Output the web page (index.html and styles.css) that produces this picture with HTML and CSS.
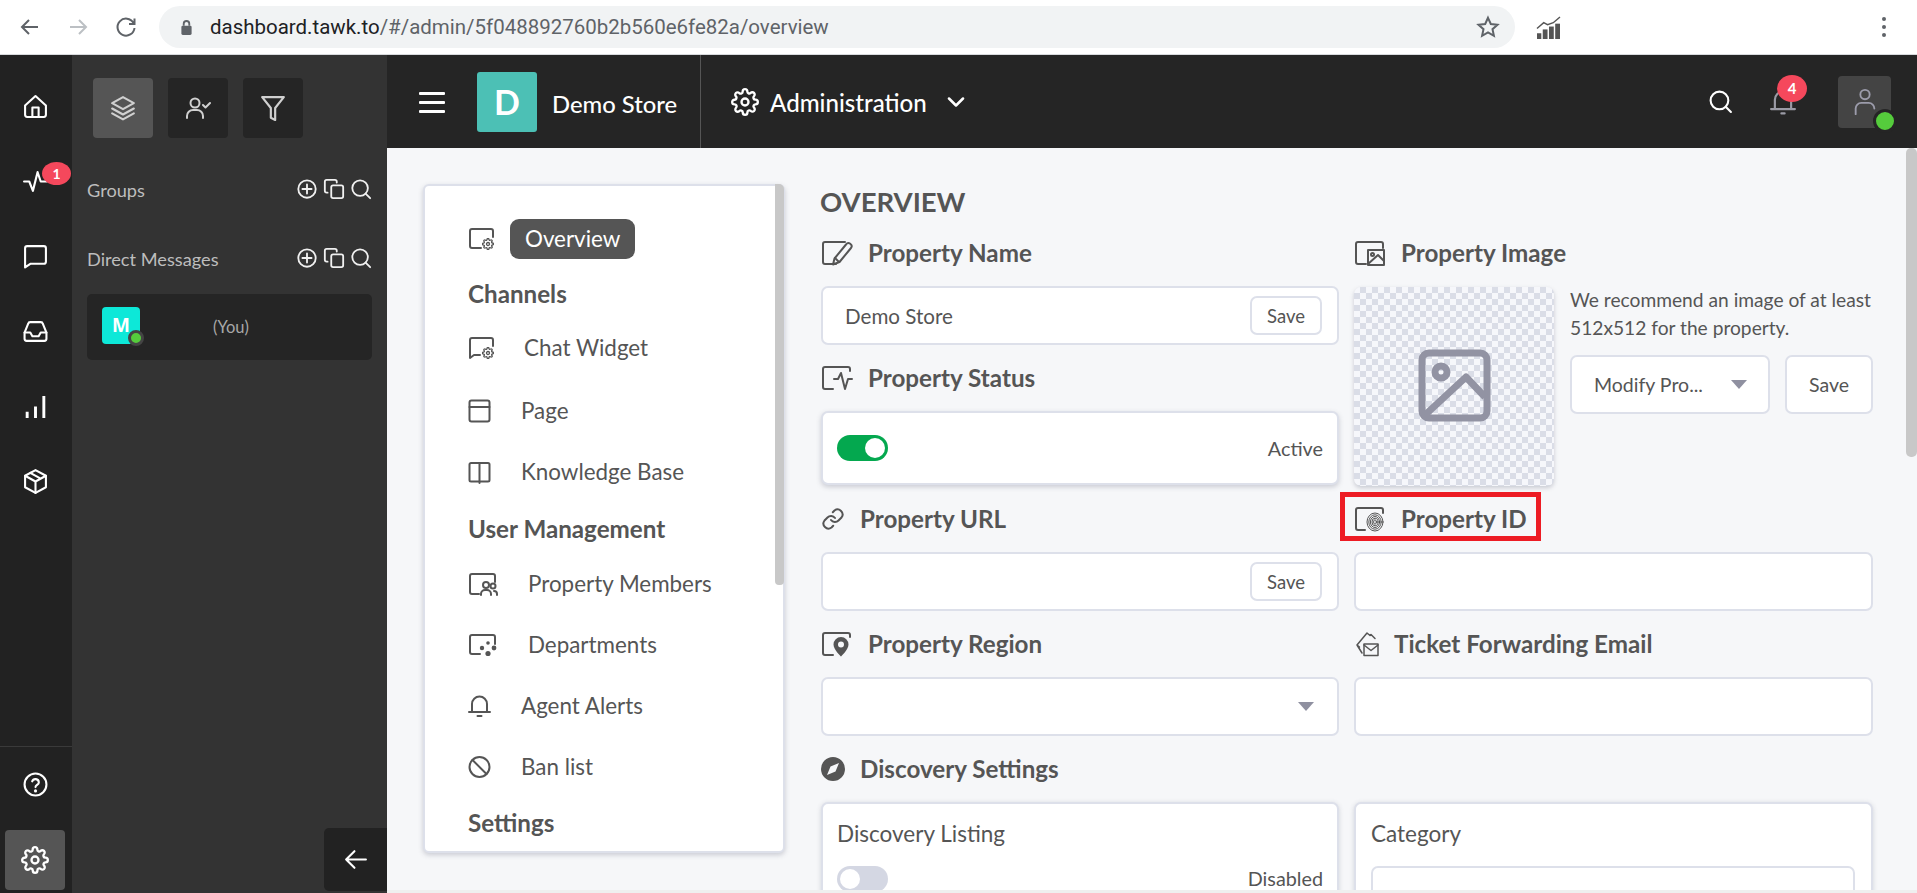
FILE: index.html
```html
<!DOCTYPE html>
<html lang="en">
<head>
<meta charset="utf-8">
<title>tawk.to Administration</title>
<link rel="stylesheet" href="styles.css">
</head>
<body>
<svg class="defs" width="0" height="0" aria-hidden="true">
  <defs>
    <symbol id="gear" viewBox="0 0 24 24"><circle cx="12" cy="12" r="3"/><path d="M19.4 15a1.65 1.65 0 0 0 .33 1.82l.06.06a2 2 0 0 1 0 2.83 2 2 0 0 1-2.83 0l-.06-.06a1.65 1.65 0 0 0-1.82-.33 1.65 1.65 0 0 0-1 1.51V21a2 2 0 0 1-2 2 2 2 0 0 1-2-2v-.09A1.65 1.65 0 0 0 9 19.4a1.65 1.65 0 0 0-1.82.33l-.06.06a2 2 0 0 1-2.83 0 2 2 0 0 1 0-2.83l.06-.06a1.65 1.65 0 0 0 .33-1.82 1.65 1.65 0 0 0-1.51-1H3a2 2 0 0 1-2-2 2 2 0 0 1 2-2h.09A1.65 1.65 0 0 0 4.6 9a1.65 1.65 0 0 0-.33-1.82l-.06-.06a2 2 0 0 1 0-2.83 2 2 0 0 1 2.83 0l.06.06a1.65 1.65 0 0 0 1.82.33H9a1.65 1.65 0 0 0 1-1.51V3a2 2 0 0 1 2-2 2 2 0 0 1 2 2v.09a1.65 1.65 0 0 0 1 1.51 1.65 1.65 0 0 0 1.82-.33l.06-.06a2 2 0 0 1 2.83 0 2 2 0 0 1 0 2.83l-.06.06a1.65 1.65 0 0 0-.33 1.82V9a1.65 1.65 0 0 0 1.51 1H21a2 2 0 0 1 2 2 2 2 0 0 1-2 2h-.09a1.65 1.65 0 0 0-1.51 1z"/></symbol>
    <symbol id="plus" viewBox="0 0 24 24"><circle cx="12" cy="12" r="9.5"/><path d="M12 7v10M7 12h10"/></symbol>
    <symbol id="copy" viewBox="0 0 24 24"><rect x="9" y="8" width="13" height="14" rx="2"/><path d="M5 16H4a2 2 0 0 1-2-2V4a2 2 0 0 1 2-2h9a2 2 0 0 1 2 2v1"/></symbol>
    <symbol id="find" viewBox="0 0 24 24"><circle cx="11" cy="11" r="8.5"/><path d="m17 17 5 5"/></symbol>
  </defs>
</svg>

<header class="browser">
  <svg class="nav" viewBox="0 0 24 24"><path d="M20 12H5M11 5l-7 7 7 7"/></svg>
  <svg class="nav nav-off" viewBox="0 0 24 24"><path d="M4 12h15M13 5l7 7-7 7"/></svg>
  <svg class="nav" viewBox="0 0 24 24"><path d="M19.5 8A8.5 8.5 0 1 0 20.5 13M20.5 3.5V9H15"/></svg>
  <div class="omnibox">
    <svg class="lock" viewBox="0 0 14 18"><path d="M4 7V5a3 3 0 0 1 6 0v2" class="lock-arc"/><rect x="1.5" y="7" width="11" height="10" rx="1.5"/></svg>
    <span class="url"><span class="url-host">dashboard.tawk.to</span>/#/admin/5f048892760b2b560e6fe82a/overview</span>
    <svg class="star" viewBox="0 0 24 24"><path d="m12 2.8 2.8 6.2 6.7.7-5 4.5 1.4 6.6-5.9-3.4-5.9 3.4 1.4-6.6-5-4.5 6.7-.7z"/></svg>
  </div>
  <svg class="ext" viewBox="0 0 26 24"><path class="ext-line" d="M1 13 8 7l4 2 6-2 7-6"/><rect x="1" y="18" width="4.500" height="6"/><rect x="7" y="14" width="5" height="10"/><rect x="13.500" y="11" width="5" height="13"/><rect x="20" y="8" width="5" height="16"/></svg>
  <div class="kebab"><i></i><i></i><i></i></div>
</header>

<div class="app">
  <nav class="rail">
    <div class="rail-top">
      <a class="rail-btn"><svg class="ic rail-ic" viewBox="0 0 24 24"><path d="M2 11 12 2l10 9v9a2 2 0 0 1-2 2H4a2 2 0 0 1-2-2z"/><path d="M9 22v-9h6v9"/></svg></a>
      <a class="rail-btn"><svg class="ic rail-ic" viewBox="0 0 24 24"><path d="M1 12h5l3.500 9L14 3l3 9h6"/></svg><span class="badge badge-rail">1</span></a>
      <a class="rail-btn"><svg class="ic rail-ic" viewBox="0 0 24 24"><path d="M2 4a2 2 0 0 1 2-2h16a2 2 0 0 1 2 2v13a2 2 0 0 1-2 2H7l-5 3.500z"/></svg></a>
      <a class="rail-btn"><svg class="ic rail-ic" viewBox="0 0 24 24"><path d="M1.500 13 5 4.500A2 2 0 0 1 7 3h10a2 2 0 0 1 2 1.500l3.500 8.500v6a2 2 0 0 1-2 2h-17a2 2 0 0 1-2-2z"/><path d="M1.500 13H7l2 3.500h6l2-3.500h5.500"/></svg></a>
      <a class="rail-btn"><svg class="ic rail-ic" viewBox="0 0 24 24"><path d="M4 23v-6M12 23V12M20 23V2" class="thick"/></svg></a>
      <a class="rail-btn"><svg class="ic rail-ic" viewBox="0 0 24 24"><path d="M12 1 22 6.500v11L12 23 2 17.500v-11z"/><path d="M2 6.500 12 12l10-5.500M12 12v11M7 3.800l10 5.500"/></svg></a>
    </div>
    <div class="rail-bottom">
      <a class="rail-btn"><svg class="ic rail-ic" viewBox="0 0 24 24"><circle cx="12" cy="12" r="10.500"/><path d="M8.800 9a3.300 3.300 0 0 1 6.400 1c0 2.200-3.200 2.600-3.200 4.500"/><path d="M12 18v.2" class="dot"/></svg></a>
      <a class="rail-active"><svg class="ic rail-gear"><use href="#gear"/></svg></a>
    </div>
  </nav>

  <aside class="panel">
    <div class="tabs">
      <a class="tab tab-on"><svg class="ic tab-ic" viewBox="0 0 24 24"><path d="M12 2 2 7.500 12 13l10-5.500z"/><path d="m2 12.500 10 5.500 10-5.500M2 17l10 5.500L22 17"/></svg></a>
      <a class="tab"><svg class="ic tab-ic" viewBox="0 0 26 24"><circle cx="10" cy="7" r="4.500"/><path d="M2 22v-2a6 6 0 0 1 6-6h4a6 6 0 0 1 6 6v2M18 9l2.500 2.500L25 7"/></svg></a>
      <a class="tab"><svg class="ic tab-ic" viewBox="0 0 24 24"><path d="M22 2H2l8 10v9l4 2V12z"/></svg></a>
    </div>
    <div class="group group-first">
      <span class="group-name">Groups</span>
      <span class="group-tools"><svg class="ic tool"><use href="#plus"/></svg><svg class="ic tool"><use href="#copy"/></svg><svg class="ic tool"><use href="#find"/></svg></span>
    </div>
    <div class="group">
      <span class="group-name">Direct Messages</span>
      <span class="group-tools"><svg class="ic tool"><use href="#plus"/></svg><svg class="ic tool"><use href="#copy"/></svg><svg class="ic tool"><use href="#find"/></svg></span>
    </div>
    <div class="dm">
      <div class="dm-avatar">M<span class="dm-dot"></span></div>
      <span class="dm-you">(You)</span>
    </div>
    <a class="back"><svg class="ic back-ic" viewBox="0 0 24 24"><path d="M22 12H3M11 4l-8 8 8 8"/></svg></a>
  </aside>

  <div class="work">
    <header class="topbar">
      <div class="brand">
        <div class="burger"><i></i><i></i><i></i></div>
        <div class="store-logo">D</div>
        <span class="store-name">Demo Store</span>
      </div>
      <svg class="ic admin-gear"><use href="#gear"/></svg>
      <span class="admin-name">Administration</span>
      <svg class="ic admin-chev" viewBox="0 0 18 10"><path d="m2 1.500 7 7 7-7"/></svg>
      <div class="top-right">
        <svg class="ic top-search"><use href="#find"/></svg>
        <div class="bell">
          <svg class="ic bell-ic" viewBox="0 0 24 24"><path d="M4.500 18V10a7.500 7.500 0 0 1 15 0v8M1 18.500h22M10.500 22.500h3"/></svg>
          <span class="badge badge-bell">4</span>
        </div>
        <div class="me">
          <svg class="ic me-ic" viewBox="0 0 24 30"><circle cx="12" cy="7" r="5"/><path d="M2 28v-6a6 6 0 0 1 6-6h8a6 6 0 0 1 6 6"/></svg>
          <span class="me-dot"></span>
        </div>
      </div>
    </header>

    <main class="content">
      <section class="menu">
        <div class="mi mi-first">
          <svg class="ic-s w27" viewBox="0 0 27 24"><path d="M13 21H4a2 2 0 0 1-2-2V4a2 2 0 0 1 2-2h19a2 2 0 0 1 2 2v6"/><use href="#gear" x="14" y="11" width="12" height="12"/></svg>
          <span class="pill">Overview</span>
        </div>
        <h3 class="mh">Channels</h3>
        <a class="mi mi-widget">
          <svg class="ic-s w27" viewBox="0 0 27 24"><path d="M12 19H6l-4 3V4a2 2 0 0 1 2-2h19a2 2 0 0 1 2 2v6"/><use href="#gear" x="14" y="11" width="12" height="12"/></svg>
          <span>Chat Widget</span>
        </a>
        <a class="mi">
          <svg class="ic-s w23" viewBox="0 0 23 24"><rect x="1.500" y="1.500" width="20" height="21" rx="2"/><path d="M1.500 8h20"/></svg>
          <span>Page</span>
        </a>
        <a class="mi">
          <svg class="ic-s w23" viewBox="0 0 23 24"><path d="M11.500 3H3a1.500 1.500 0 0 0-1.500 1.500V20A1.500 1.500 0 0 0 3 21.500h17a1.500 1.500 0 0 0 1.500-1.500V4.500A1.500 1.500 0 0 0 20 3h-8.500v20"/></svg>
          <span>Knowledge Base</span>
        </a>
        <h3 class="mh">User Management</h3>
        <a class="mi">
          <svg class="ic-s w30" viewBox="0 0 30 24"><path d="M11 22H4a2 2 0 0 1-2-2V4a2 2 0 0 1 2-2h21a2 2 0 0 1 2 2v6"/><circle cx="18" cy="13" r="3"/><circle cx="25" cy="14" r="2.500"/><path d="M13 23v-1a4 4 0 0 1 4-4h2a4 4 0 0 1 4 4v1M26 19a3 3 0 0 1 3 3v1"/></svg>
          <span>Property Members</span>
        </a>
        <a class="mi">
          <svg class="ic-s w30" viewBox="0 0 30 24"><path d="M12 21H4a2 2 0 0 1-2-2V4a2 2 0 0 1 2-2h21a2 2 0 0 1 2 2v7"/><circle class="solid" cx="14" cy="15" r="2.200"/><circle class="solid" cx="20" cy="10" r="1.800"/><circle class="solid" cx="26" cy="15" r="2.400"/><circle class="solid" cx="20" cy="20.500" r="2.600"/></svg>
          <span>Departments</span>
        </a>
        <a class="mi">
          <svg class="ic-s w23" viewBox="0 0 23 24"><path d="M4 17v-7a7.500 7.500 0 0 1 15 0v7M1 18h21M9.500 22h4"/></svg>
          <span>Agent Alerts</span>
        </a>
        <a class="mi">
          <svg class="ic-s w23" viewBox="0 0 23 24"><circle cx="11.500" cy="12" r="10"/><path d="m4.500 5 14 14"/></svg>
          <span>Ban list</span>
        </a>
        <h3 class="mh mh-last">Settings</h3>
        <span class="menu-scroll"></span>
      </section>

      <section class="overview">
        <h1 class="title">OVERVIEW</h1>
        <div class="form">
          <div class="col">
            <div class="head">
              <svg class="ic-s w32" viewBox="0 0 32 26"><path d="M15 24H4a2 2 0 0 1-2-2V4a2 2 0 0 1 2-2h20"/><path d="M12 24.500l1.500-6L25 4.500a3 3 0 0 1 5 3.500L18.500 22z"/><path d="m14 18 4 4"/></svg>
              <span>Property Name</span>
            </div>
            <div class="field">
              <span class="value">Demo Store</span>
              <span class="save">Save</span>
            </div>
            <div class="head">
              <svg class="ic-s w32" viewBox="0 0 32 26"><path d="M12 24H4a2 2 0 0 1-2-2V4a2 2 0 0 1 2-2h23a2 2 0 0 1 2 2v2"/><path d="M13 14h4l3-6 4 16 3-10h4"/></svg>
              <span>Property Status</span>
            </div>
            <div class="card-status">
              <span class="toggle toggle-on"><i></i></span>
              <span class="state">Active</span>
            </div>
          </div>
          <div class="col">
            <div class="head">
              <svg class="ic-s w32" viewBox="0 0 32 26"><path d="M12 24H4a2 2 0 0 1-2-2V4a2 2 0 0 1 2-2h23a2 2 0 0 1 2 2v4"/><rect x="14" y="10" width="16" height="15"/><circle cx="18.500" cy="14.500" r="1.500"/><path d="m14 24 10-9 6 6"/></svg>
              <span>Property Image</span>
            </div>
            <div class="image-row">
              <div class="checker">
                <svg class="checker-ic" viewBox="0 0 75 75"><rect x="5" y="5" width="65" height="65" rx="7"/><circle cx="24" cy="24" r="6"/><path d="M8 67 49 29l19 20"/></svg>
              </div>
              <div class="image-side">
                <p class="hint">We recommend an image of at least 512x512 for the property.</p>
                <div class="image-actions">
                  <div class="modify"><span>Modify Pro...</span><i class="caret"></i></div>
                  <div class="save-lg">Save</div>
                </div>
              </div>
            </div>
          </div>

          <div class="col">
            <div class="head head-short">
              <svg class="ic-s w22" viewBox="0 0 24 24"><path d="M10 13a5 5 0 0 0 7.500.5l3-3a5 5 0 0 0-7-7l-1.700 1.700"/><path d="M14 11a5 5 0 0 0-7.500-.5l-3 3a5 5 0 0 0 7 7l1.700-1.700"/></svg>
              <span>Property URL</span>
            </div>
            <div class="field"><span class="save">Save</span></div>
            <div class="head">
              <svg class="ic-s w32" viewBox="0 0 32 26"><path d="M12 24H4a2 2 0 0 1-2-2V4a2 2 0 0 1 2-2h23a2 2 0 0 1 2 2v2"/><path class="solid" fill-rule="evenodd" d="M20 6a7.500 7.500 0 0 1 7.500 7.500c0 5-7.500 12-7.500 12s-7.500-7-7.500-12A7.500 7.500 0 0 1 20 6zm0 4.500a3 3 0 1 0 0 6 3 3 0 0 0 0-6z"/></svg>
              <span>Property Region</span>
            </div>
            <div class="field field-select"><i class="caret"></i></div>
            <div class="head head-short">
              <svg class="disc" viewBox="0 0 24 24"><path class="solid" fill-rule="evenodd" d="M12 0a12 12 0 1 1 0 24 12 12 0 0 1 0-24zm6 6-8.500 3.500L6 18l8.500-3.500z"/></svg>
              <span>Discovery Settings</span>
            </div>
            <div class="card-big">
              <div class="big-label">Discovery Listing</div>
              <div class="big-row">
                <span class="toggle"><i></i></span>
                <span class="state">Disabled</span>
              </div>
            </div>
          </div>

          <div class="col">
            <div class="head head-id">
              <svg class="ic-s w32" viewBox="0 0 32 26"><path d="M11 24H4a2 2 0 0 1-2-2V4a2 2 0 0 1 2-2h23a2 2 0 0 1 2 2v3"/><g class="finger"><ellipse cx="21" cy="16" rx="8" ry="9"/><ellipse cx="21" cy="16" rx="6.200" ry="7.200"/><ellipse cx="21" cy="16" rx="4.600" ry="5.500"/><ellipse cx="21" cy="16" rx="3" ry="3.800"/><ellipse cx="21" cy="16" rx="1.400" ry="2.200"/></g></svg>
              <span>Property ID</span>
              <span class="highlight"></span>
            </div>
            <div class="field"></div>
            <div class="head head-ticket">
              <svg class="ic-s w25" viewBox="0 0 25 26"><path d="M3 14 13 2l3 2.500 1 -1 4 4M3 14l2.500 2M3 14l5 8"/><rect x="10" y="13" width="14" height="11.500"/><path d="m10 14 7 5.500 7-5.500"/></svg>
              <span>Ticket Forwarding Email</span>
            </div>
            <div class="field"></div>
            <div class="head-empty"></div>
            <div class="card-big">
              <div class="big-label big-label-cat">Category</div>
              <div class="cat-input"></div>
            </div>
          </div>
        </div>
      </section>

      <span class="page-scroll"></span>
      <span class="page-hscroll"></span>
    </main>
  </div>
</div>
</body>
</html>
```

FILE: styles.css
```css
* { box-sizing: border-box; }
html, body { margin: 0; height: 100%; }
body {
  width: 1917px;
  height: 893px;
  overflow: hidden;
  font-family: Lato, "Liberation Sans", sans-serif;
  color: #555;
  background: #fff;
}
.defs { position: absolute; }
i { display: block; }
a { display: flex; color: inherit; }
h1, h3, p { margin: 0; }

.ic { fill: none; stroke: currentColor; stroke-width: 2; stroke-linecap: round; stroke-linejoin: round; }
.ic-s { flex: none; height: 24px; fill: none; stroke: #555; stroke-width: 2; stroke-linecap: round; stroke-linejoin: round; }
.ic-s use { stroke-width: 2.600; }
.solid { fill: #555; stroke: none; }
.thick { stroke-width: 2.800; stroke-linecap: butt; }
.dot { stroke-width: 3; }
.w22 { width: 24px; }
.w23 { width: 23px; }
.w25 { width: 25px; height: 26px; stroke-width: 1.500; }
.w27 { width: 27px; }
.w30 { width: 30px; }
.w32 { width: 32px; height: 26px; }
.finger { stroke: #444; stroke-width: .9; }

/* browser chrome */
.browser {
  display: flex;
  align-items: center;
  height: 55px;
  padding-left: 18px;
  border-bottom: 1px solid #d8dadd;
  background: #fff;
}
.nav { flex: none; width: 24px; height: 24px; margin-right: 24px; fill: none; stroke: #5f6368; stroke-width: 2; }
.nav-off { stroke: #bcc0c4; }
.omnibox {
  flex: none;
  display: flex;
  align-items: center;
  width: 1356px;
  height: 42px;
  margin-left: -3px;
  padding: 0 15px 0 21px;
  border-radius: 21px;
  background: #f1f3f4;
}
.lock { flex: none; width: 13px; height: 17px; fill: #5f6368; }
.lock-arc { fill: none; stroke: #5f6368; stroke-width: 2; }
.url { margin-left: 17px; font: 20.480px Roboto, sans-serif; color: #5f6368; white-space: nowrap; }
.url-host { color: #202124; }
.star { flex: none; width: 24px; height: 24px; margin-left: auto; fill: none; stroke: #5f6368; stroke-width: 2; }
.ext { flex: none; width: 25px; height: 23px; margin-left: 21px; fill: #555; }
.ext-line { fill: none; stroke: #555; stroke-width: 1.500; }
.kebab { display: flex; flex-direction: column; gap: 4px; margin-left: 321px; }
.kebab i { width: 4px; height: 4px; border-radius: 50%; background: #5f6368; }

/* layout */
.app { display: grid; grid-template-columns: 72px 315px 1530px; grid-template-rows: 838px; height: 838px; }

/* icon rail */
.rail { display: flex; flex-direction: column; justify-content: space-between; padding-top: 14px; background: #222; color: #fff; }
.rail-btn { position: relative; align-items: center; justify-content: center; height: 75px; padding-right: 2px; }
.rail-ic { width: 25px; height: 25px; }
.rail-bottom { height: 147px; border-top: 1px solid #3a3a3a; }
.rail-active {
  align-items: center;
  justify-content: center;
  width: 60px;
  height: 60px;
  margin: 8px 0 0 5px;
  border-radius: 4px;
  background: #555;
}
.rail-gear { width: 28px; height: 28px; }

.badge {
  position: absolute;
  display: flex;
  align-items: center;
  justify-content: center;
  color: #fff;
  background: #f5485c;
  font-weight: 700;
  border-radius: 50%;
}
.badge-rail { top: 18px; left: 42px; width: 29px; height: 23px; font-size: 14px; }
.badge-bell { top: -13px; left: 7px; width: 30px; height: 27px; font-size: 15px; }

/* channel panel */
.panel { position: relative; padding: 23px 15px 0; background: #333; color: #fff; }
.tabs { display: flex; gap: 15px; margin-left: 6px; }
.tab { align-items: center; justify-content: center; width: 60px; height: 60px; border-radius: 4px; background: #252525; color: #d0d0d0; }
.tab-on { background: #555; }
.tab-ic { width: 26px; height: 26px; }
.group { display: flex; align-items: center; justify-content: space-between; height: 30px; margin-top: 39px; }
.group-first { margin-top: 38px; }
.group-name { margin-top: -2px; font-size: 18.200px; color: #bdbdbd; }
.group-tools { display: flex; gap: 5px; color: #f0f0f0; margin-top: -4px; }
.tool { width: 22px; height: 22px; }
.dm { display: flex; align-items: center; height: 66px; margin-top: 19px; padding-left: 15px; border-radius: 5px; background: #252525; }
.dm-avatar {
  position: relative;
  display: flex;
  align-items: center;
  justify-content: center;
  width: 38px;
  height: 37px;
  margin-top: -4px;
  border-radius: 4px;
  background: #0de8d8;
  color: #fff;
  font: 700 19px "Open Sans", sans-serif;
}
.dm-dot { position: absolute; right: -4px; bottom: -2px; width: 16px; height: 16px; border: 3px solid #444; border-radius: 50%; background: #55cc3c; }
.dm-you { margin: 0 0 0 73px; font-size: 16.500px; color: #a8a8a8; }
.back {
  position: absolute;
  right: 0;
  bottom: 2px;
  align-items: center;
  justify-content: center;
  width: 63px;
  height: 63px;
  border-radius: 5px 0 0 5px;
  background: #222;
  color: #fff;
}
.back-ic { width: 25px; height: 25px; }

/* top bar */
.work { display: flex; flex-direction: column; min-width: 0; min-height: 0; }
.topbar { display: flex; flex: none; align-items: center; height: 93px; background: #252525; color: #fff; }
.brand { display: flex; flex: none; align-items: center; width: 314px; height: 100%; padding-left: 32px; border-right: 1px solid #555; }
.burger { display: flex; flex-direction: column; gap: 6px; width: 26px; margin-top: 1px; }
.burger i { height: 3px; background: #fff; border-radius: 1px; }
.store-logo {
  display: flex;
  align-items: center;
  justify-content: center;
  width: 60px;
  height: 60px;
  margin-left: 32px;
  border-radius: 3px;
  background: #4cc0b5;
  font-size: 34px;
  font-weight: 700;
}
.store-name { margin-left: 15px; font-size: 23.800px; font-weight: 500; white-space: nowrap; padding-top: 4px; }
.admin-gear { width: 28px; height: 28px; margin-left: 30px; }
.admin-name { margin-left: 11px; padding-top: 2px; font-size: 24.100px; font-weight: 500; }
.admin-chev { width: 18px; height: 10px; margin-left: 20px; stroke-width: 2.500; }
.top-right { display: flex; align-items: center; margin-left: auto; padding-right: 26px; }
.top-search { width: 25px; height: 25px; margin-right: 1px; }
.bell { position: relative; margin-left: 36px; color: #9a9aa5; }
.bell-ic { display: block; width: 26px; height: 28px; }
.me { position: relative; display: flex; align-items: center; justify-content: center; width: 53px; height: 52px; margin-left: 42px; border-radius: 4px; background: #444; color: #9c9cab; }
.me-ic { width: 26px; height: 28px; }
.me-dot { position: absolute; right: -6px; bottom: -5px; width: 24px; height: 24px; border: 3px solid #252525; border-radius: 50%; background: #55cc3c; }

/* content */
.content { position: relative; display: flex; flex: 1; gap: 36px; min-height: 0; padding: 36px 0 0 36px; overflow: hidden; background: #f6f7f9; }
.menu {
  position: relative;
  flex: none;
  width: 362px;
  height: 669px;
  padding: 33px 0 0 43px;
  border: 2px solid #dde0ea;
  border-radius: 6px;
  background: #fff;
  box-shadow: 0 2px 5px rgba(70, 75, 100, .25);
}
.mi { display: flex; align-items: center; gap: 30px; height: 61px; font-size: 22.400px; white-space: nowrap; }
.mi-first { gap: 15px; height: 40px; margin-bottom: 9px; }
.mi-widget { gap: 29px; margin: -1px 0 2px; }
.mh { display: flex; align-items: center; height: 50px; margin-top: 1px; font-size: 24.200px; font-weight: 700; }
.mh-last { margin-top: 0; }
.pill { padding: 0 15px; line-height: 40px; border-radius: 9px; background: #555; color: #fff; }
.menu-scroll { position: absolute; top: -2px; right: -1px; width: 9px; height: 401px; border-radius: 0 5px 4px 4px; background: #c8c8c8; }

.overview { flex: none; width: 1052px; }
.title { height: 34px; margin: 1px 0 17px -1px; font-size: 27.500px; font-weight: 700; line-height: 34px; }
.form { display: grid; grid-template-columns: 518px 519px; column-gap: 15px; }
.col { display: flex; flex-direction: column; min-width: 0; }
.head { position: relative; display: flex; flex: none; align-items: center; gap: 15px; height: 34px; margin-bottom: 16px; font-size: 24.200px; font-weight: 700; white-space: nowrap; }
.head > span { margin-top: -2px; }
.head-empty { height: 50px; flex: none; }
.disc { flex: none; width: 24px; height: 26px; }
.field {
  position: relative;
  display: flex;
  flex: none;
  align-items: center;
  justify-content: flex-end;
  height: 59px;
  margin-bottom: 16px;
  padding: 0 15px 0 22px;
  border: 2px solid #dde0ea;
  border-radius: 7px;
  background: #fff;
}
.value { margin-right: auto; font-size: 20.600px; }
.save { display: flex; align-items: center; justify-content: center; width: 72px; height: 39px; border: 2px solid #dde0ea; border-radius: 7px; font-size: 18.500px; }
.field-select { padding-right: 23px; }
.caret { display: block; width: 0; height: 0; border: 8px solid transparent; border-top: 9px solid #8f90a0; border-bottom: 0; }
.card-status, .big-row { display: flex; align-items: center; justify-content: space-between; }
.card-status {
  height: 74px;
  margin-bottom: 17px;
  padding: 0 14px;
  border: 2px solid #dde0ea;
  border-radius: 7px;
  background: #fff;
  box-shadow: 0 2px 5px rgba(70, 75, 100, .25);
}
.toggle { display: block; width: 51px; height: 26px; padding: 3px; border-radius: 13px; background: #d4d7e3; }
.toggle i { width: 20px; height: 20px; border-radius: 50%; background: #fff; }
.toggle-on { background: #04a84f; }
.toggle-on i { margin-left: 25px; }
.state { font-size: 19.800px; }
.image-row { display: flex; gap: 16px; height: 199px; margin: 1px 0 16px; }
.checker {
  display: flex;
  flex: none;
  align-items: center;
  justify-content: center;
  width: 200px;
  height: 199px;
  border-radius: 7px;
  background-color: #f6f7fb;
  background-image: conic-gradient(#dadde7 25%, transparent 0 50%, #dadde7 0 75%, transparent 0);
  background-size: 12px 12px;
  box-shadow: 0 2px 4px rgba(70, 75, 100, .25);
}
.checker-ic { width: 75px; height: 75px; margin-top: -2px; fill: none; stroke: #9293a3; stroke-width: 7; stroke-linejoin: round; }
.image-side { display: flex; flex-direction: column; flex: 1; }
.hint { margin-top: -1px; font-size: 19.200px; line-height: 28px; }
.image-actions { display: flex; gap: 15px; margin-top: 13px; }
.modify, .save-lg { display: flex; align-items: center; height: 59px; border: 2px solid #dde0ea; border-radius: 7px; background: #fff; font-size: 19.500px; }
.modify { justify-content: space-between; width: 200px; padding: 0 21px 0 22px; }
.save-lg { justify-content: center; width: 88px; }
.highlight { position: absolute; top: -8px; left: -14px; width: 201px; height: 49px; border: 5px solid #ed1c24; }
.card-big { height: 120px; padding: 13px 14px; border: 2px solid #dde0ea; border-radius: 7px; background: #fff; box-shadow: 0 1px 5px rgba(70, 75, 100, .2); }
.big-label { height: 34px; font-size: 22.500px; line-height: 34px; }
.big-label-cat { margin-left: 1px; }
.big-row { margin-top: 15px; }
.big-row .state { margin-top: -2px; }
.cat-input { width: 484px; height: 60px; margin: 15px 0 0 1px; border: 2px solid #dde0ea; border-radius: 7px; }
.page-scroll { position: absolute; top: 0; right: 0; width: 11px; height: 309px; border-radius: 5px; background: #c8c8c8; }
.page-hscroll { position: absolute; left: 0; bottom: 0; width: 100%; height: 3px; background: #efefef; }
```
